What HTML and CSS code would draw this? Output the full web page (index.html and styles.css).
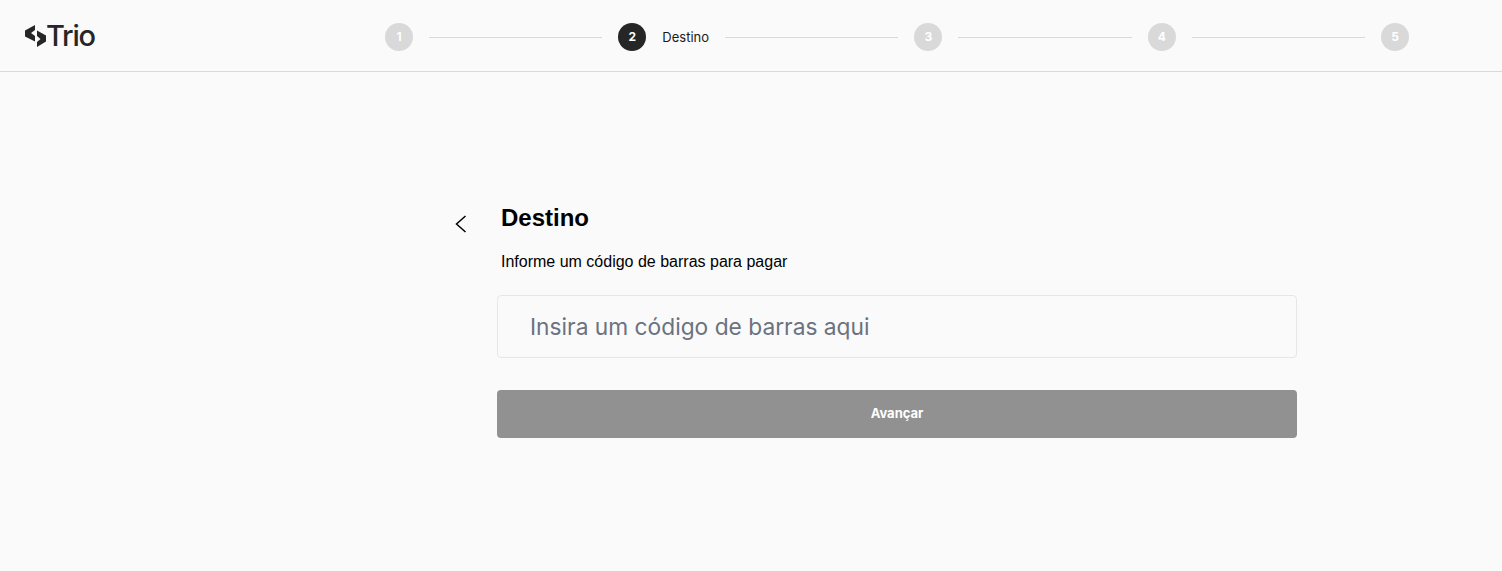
FILE: index.html
```html
<!DOCTYPE html>
<html lang="pt-BR">
	<head>
		<meta charset="UTF-8">
		<meta name="viewport" content="width=device-width, initial-scale=1.0">
		<title>Destino</title>
		<link rel="stylesheet" href="styles.css">
	</head>
	<body>
		<header class="header">
			<div class="logo">
				<svg class="logo-mark" viewBox="0 0 21 22" width="21" height="22">
					<path d="M10 0V5L6 8L10 11V16.5L0 11.5V5.5Z" fill="#262626"/>
					<path d="M12 22V17L15.5 14L12 11V5.5L21 10.5V16.5Z" fill="#262626"/>
				</svg>
				<span class="logo-text">Trio</span>
			</div>

			<div class="stepper">
				<span class="step">1</span>
				<span class="line"></span>
				<span class="step active">2</span>
				<span class="step-label">Destino</span>
				<span class="line"></span>
				<span class="step">3</span>
				<span class="line"></span>
				<span class="step">4</span>
				<span class="line"></span>
				<span class="step">5</span>
			</div>
		</header>

		<main class="content">
			<button class="back" type="button" aria-label="Voltar">
				<svg viewBox="0 0 12 18" width="12" height="18">
					<path d="M10.5 1L1.5 9L10.5 17" fill="none" stroke="#000" stroke-width="1.5"/>
				</svg>
			</button>

			<div class="form">
				<h1 class="title">Destino</h1>
				<p class="subtitle">Informe um código de barras para pagar</p>
				<input class="field" type="text" placeholder="Insira um código de barras aqui">
				<button class="submit" type="button">Avançar</button>
			</div>
		</main>
	</body>
</html>
```

FILE: styles.css
```css
* {
	margin: 0;
	padding: 0;
	box-sizing: border-box;
}

body {
	height: 571px;
	overflow: hidden;
	background-color: #fafafa;
	font-family: "Liberation Sans", Arial, sans-serif;
}

/* topo */
.header {
	height: 72px;
	display: flex;
	align-items: center;
	padding-left: 25px;
	border-bottom: 1px solid #d9d9d9;
}

.logo {
	width: 360px;
	display: flex;
	align-items: center;
	flex-shrink: 0;
}

.logo-mark {
	flex-shrink: 0;
}

.logo-text {
	font-family: Inter, sans-serif;
	font-size: 29px;
	line-height: 32px;
	font-weight: 500;
	letter-spacing: -1.2px;
	color: #262626;
}

.stepper {
	width: 1024px;
	display: flex;
	align-items: center;
	gap: 16px;
	padding-top: 3px;
}

.step {
	width: 28px;
	height: 28px;
	flex-shrink: 0;
	border-radius: 50%;
	background-color: #d9d9d9;
	color: #fff;
	font-family: Inter, sans-serif;
	font-size: 12px;
	font-weight: 700;
	line-height: 28px;
	text-align: center;
}

.step.active {
	background-color: #262626;
}

.step-label {
	font-family: Inter, sans-serif;
	font-size: 13px;
	color: #1a1a1a;
}

.line {
	flex: 1;
	height: 1px;
	margin-top: 1px;
	background-color: #d9d9d9;
}

/* formulario */
.content {
	display: flex;
	padding: 132px 0 0 455px;
}

.back {
	width: 42px;
	height: 18px;
	margin-top: 11px;
	flex-shrink: 0;
	border: none;
	background: none;
	text-align: left;
}

.form {
	width: 800px;
}

.title {
	padding-left: 4px;
	font-size: 24px;
	line-height: 28px;
	font-weight: 700;
	color: #000;
}

.subtitle {
	margin-top: 21px;
	padding-left: 4px;
	font-size: 16px;
	line-height: 18px;
	color: #000;
}

.field {
	display: block;
	width: 100%;
	height: 63px;
	margin-top: 24px;
	padding: 0 32px;
	border: 1px solid #e5e7eb;
	border-radius: 4px;
	background: transparent;
	font-family: Inter, sans-serif;
	font-size: 22.75px;
}

.field::placeholder {
	color: #6b7280;
	opacity: 1;
}

.submit {
	display: block;
	width: 100%;
	height: 48px;
	margin-top: 32px;
	padding-bottom: 2px;
	border: none;
	border-radius: 4px;
	background-color: #919191;
	color: #fff;
	font-family: Inter, sans-serif;
	font-size: 13px;
	font-weight: 700;
}
```
